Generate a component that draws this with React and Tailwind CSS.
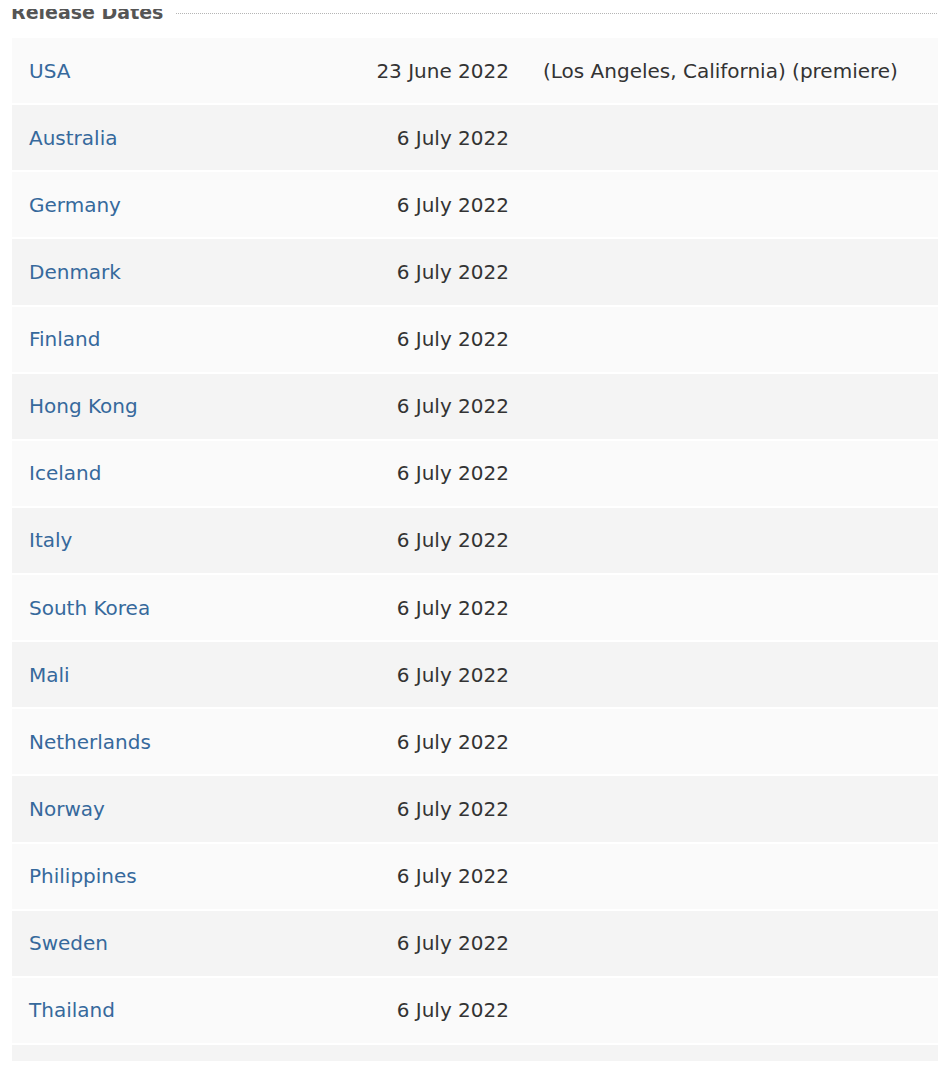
import React from 'react';

const releases = [
  { country: 'USA', date: '23 June 2022', note: '(Los Angeles, California) (premiere)' },
  { country: 'Australia', date: '6 July 2022' },
  { country: 'Germany', date: '6 July 2022' },
  { country: 'Denmark', date: '6 July 2022' },
  { country: 'Finland', date: '6 July 2022' },
  { country: 'Hong Kong', date: '6 July 2022' },
  { country: 'Iceland', date: '6 July 2022' },
  { country: 'Italy', date: '6 July 2022' },
  { country: 'South Korea', date: '6 July 2022' },
  { country: 'Mali', date: '6 July 2022' },
  { country: 'Netherlands', date: '6 July 2022' },
  { country: 'Norway', date: '6 July 2022' },
  { country: 'Philippines', date: '6 July 2022' },
  { country: 'Sweden', date: '6 July 2022' },
  { country: 'Thailand', date: '6 July 2022' },
];

const App = () => {
  return (
    <div
      className="min-h-[1071px] bg-white pt-[9px] text-[#333]"
      style={{ fontFamily: '"DejaVu Sans", Verdana, sans-serif' }}
    >
      {/* Section heading (top clipped like the original) */}
      <div className="flex items-start h-[29px] overflow-hidden pl-[11px] w-[937px]">
        <h2 className="mt-[-6px] text-[19px] leading-[19px] font-bold text-[#555] whitespace-nowrap">
          Release Dates
        </h2>
        <div className="flex-1 mt-[4px] ml-[13px] border-t border-dotted border-[#b5b5b5]" />
      </div>

      {/* Release table */}
      <div className="ml-[12px] w-[926px] flex flex-col gap-[2px]">
        {releases.map((r, i) => (
          <div
            key={r.country}
            className={`flex items-center h-[65.13px] text-[20px] leading-[24px] ${
              i % 2 === 0 ? 'bg-[#fafafa]' : 'bg-[#f4f4f4]'
            }`}
          >
            <div className="w-[328px] pl-[17px]">
              <a href="#" className="text-[#36699c]">
                {r.country}
              </a>
            </div>
            <div className="w-[186px] pr-[17px] text-right whitespace-nowrap">{r.date}</div>
            <div className="flex-1 pl-[17px] whitespace-nowrap">{r.note}</div>
          </div>
        ))}
        <div className="h-[16px] bg-[#f4f4f4]" />
      </div>
    </div>
  );
};

export default App;
